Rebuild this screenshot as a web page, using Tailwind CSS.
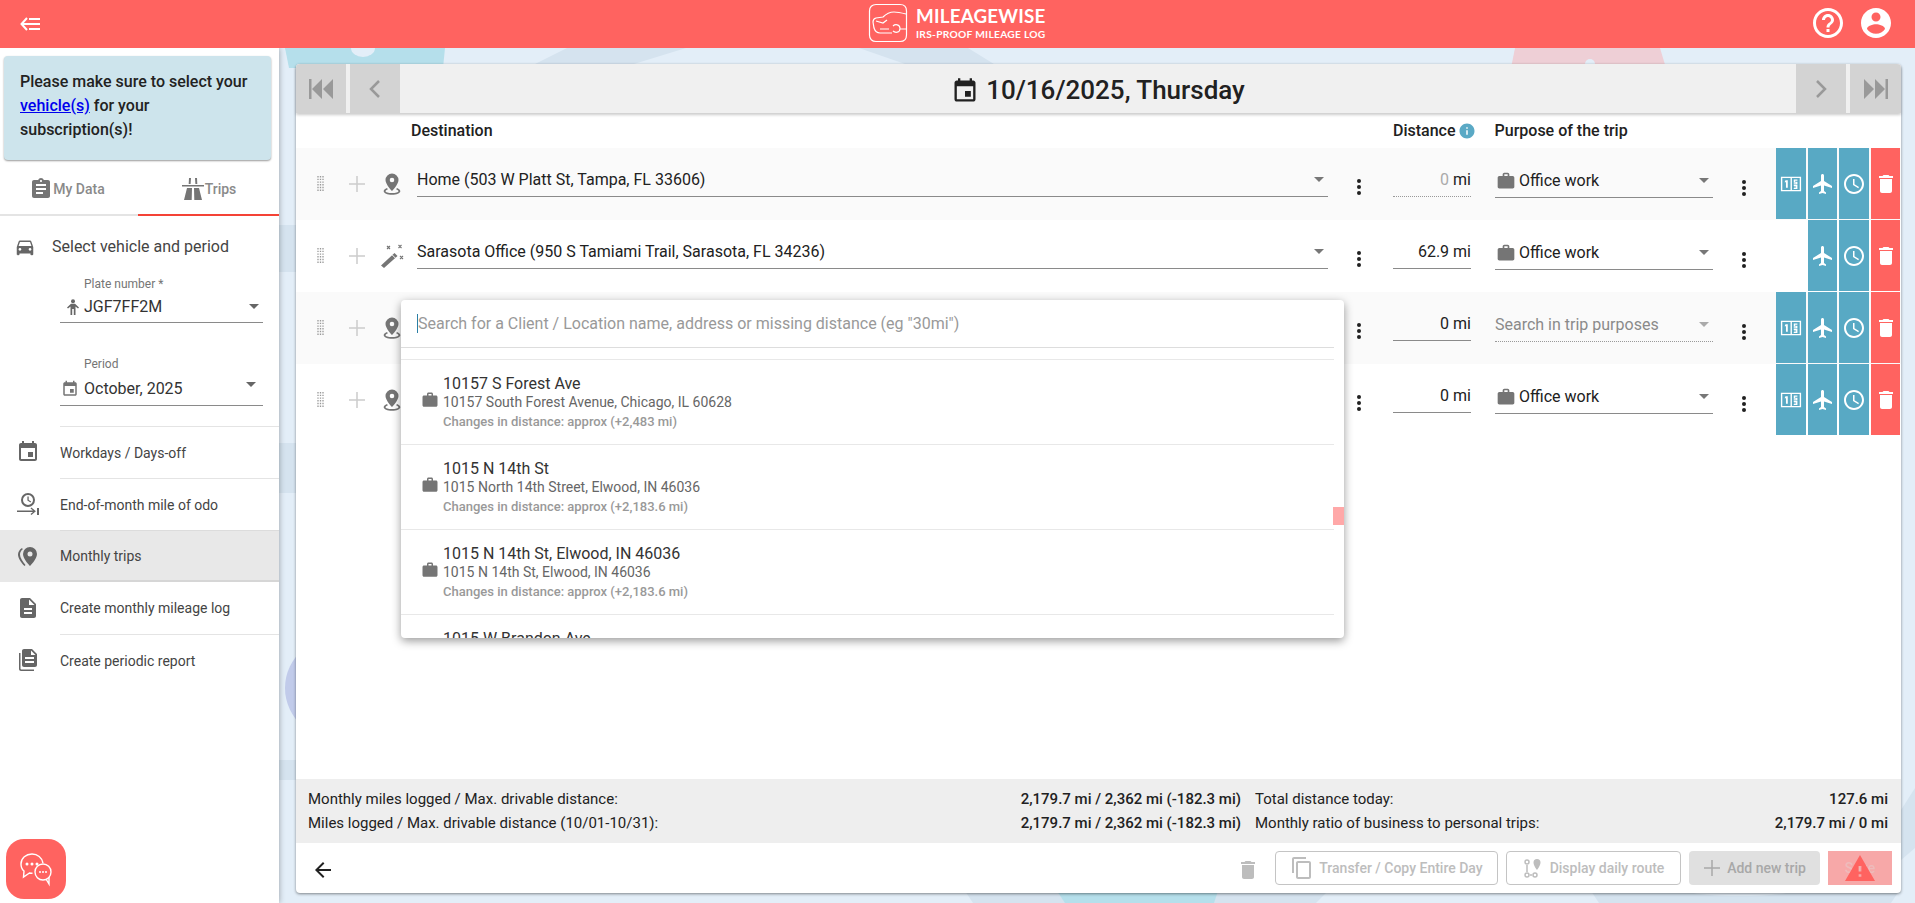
<!DOCTYPE html>
<html lang="en">
<head>
  <meta charset="UTF-8">
  <meta name="viewport" content="width=device-width, initial-scale=1.0">
  <title>MileageWise</title>
  <script src="https://cdn.jsdelivr.net/npm/@tailwindcss/browser@4"></script>
</head>
<body class="h-[903px] overflow-hidden font-['Roboto',sans-serif] text-[#212121]">
  <svg class="hidden">
    <symbol id="i-event" viewBox="0 0 24 24"><path d="M17 12h-5v5h5v-5zM16 1v2H8V1H6v2H5c-1.11 0-1.99.9-1.99 2L3 19c0 1.1.89 2 2 2h14c1.1 0 2-.9 2-2V5c0-1.1-.9-2-2-2h-1V1h-2zm3 18H5V8h14v11z"/></symbol>
    <symbol id="i-work" viewBox="0 0 24 24"><path d="M20 6h-4V4c0-1.11-.89-2-2-2h-4c-1.11 0-2 .89-2 2v2H4c-1.11 0-1.99.89-1.99 2L2 19c0 1.11.89 2 2 2h16c1.11 0 2-.89 2-2V8c0-1.11-.89-2-2-2zm-6 0h-4V4h4v2z"/></symbol>
    <symbol id="i-delete" viewBox="0 0 24 24"><path d="M6 19c0 1.1.9 2 2 2h8c1.1 0 2-.9 2-2V7H6v12zM19 4h-3.5l-1-1h-5l-1 1H5v2h14V4z"/></symbol>
    <symbol id="i-flight" viewBox="0 0 24 24"><path d="M21 16v-2l-8-5V3.5c0-.83-.67-1.5-1.5-1.5S10 2.67 10 3.5V9l-8 5v2l8-2.5V19l-2 1.5V22l3.5-1 3.5 1v-1.5L13 19v-5.5l8 2.5z"/></symbol>
    <symbol id="i-clock" viewBox="0 0 24 24"><path d="M11.99 2C6.47 2 2 6.48 2 12s4.47 10 9.99 10C17.52 22 22 17.52 22 12S17.52 2 11.99 2zM12 20c-4.42 0-8-3.58-8-8s3.58-8 8-8 8 3.58 8 8-3.58 8-8 8zm.5-13H11v6l5.25 3.15.75-1.23-4.5-2.67z"/></symbol>
    <symbol id="i-more" viewBox="0 0 24 24"><circle cx="12" cy="6" r="2"/><circle cx="12" cy="12" r="2"/><circle cx="12" cy="18" r="2"/></symbol>
    <symbol id="i-plus" viewBox="0 0 24 24"><path d="M12 4v16M4 12h16" fill="none" stroke="currentColor" stroke-width="1.5"/></symbol>
    <symbol id="i-pin" viewBox="0 0 24 24"><path fill-rule="evenodd" d="M12 1.500a6.500 6.500 0 0 0-6.500 6.500C5.500 12.500 12 19 12 19s6.500-6.500 6.500-11A6.500 6.500 0 0 0 12 1.500zm0 4.200a2.300 2.300 0 1 1 0 4.600 2.300 2.300 0 0 1 0-4.600z"/><path d="M7 16C4.800 16.800 3.700 18 3.700 19.300 3.700 21.200 7.300 22.800 12 22.800s8.300-1.600 8.300-3.500c0-1.300-1.100-2.500-3.300-3.300l-.9 1.300c1.400.5 2.400 1.200 2.400 2 0 1-2.900 1.800-6.500 1.800s-6.500-.8-6.500-1.800c0-.8 1-1.500 2.400-2z"/></symbol>
    <symbol id="i-wand" viewBox="0 0 24 24"><path d="M1 21.500 14.500 9l3 3L4 24z"/><path d="M12.300 11l3 3" stroke="#fafafa" stroke-width="1"/><path d="M7 2l3 3M10 2 7 5M18.500 1l3 3M21.500 1l-3 3M20 12l3 3M23 12l-3 3" fill="none" stroke="currentColor" stroke-width="1.100"/></symbol>
    <symbol id="i-caret" viewBox="0 0 10 5"><path d="M0 0h10L5 5z"/></symbol>
    <symbol id="i-numbers" viewBox="0 0 24 24"><path fill-rule="evenodd" d="M1 4h22v16H1zm1.500 1.500v13h9v-13zm10.500 0v13h8.500v-13z"/><path d="M6 8h2.500v8H6.500V10H5zM15 7h4v1.500h-2.500v1h2.500v3h-4v-1.200h2.500v-.7H15zM15 13h4v4.500h-4v-1.200h2.500v-.6H15.500v-.9h2v-.6H15z"/></symbol>
    <symbol id="i-handle" viewBox="0 0 7 16"><path d="M1 0v16M3.500 0v16M6 0v16" fill="none" stroke="currentColor" stroke-width="1.300" stroke-dasharray="1.400 1.300"/></symbol>
  </svg>

  <!-- top bar -->
  <header class="relative z-20 h-12 bg-[#ff6360] flex items-center justify-between pl-5 pr-[21px] text-white">
    <svg class="w-[22px] h-[14px]" viewBox="0 0 22 14" fill="none" stroke="currentColor" stroke-width="2"><path d="M7 1 1.500 7 7 13M2 7h18M9 2h11M9 12h11"/></svg>
    <div class="absolute left-[868px] top-[3px] flex items-center gap-2">
      <svg class="w-10 h-10" viewBox="0 0 40 40" fill="none" stroke="currentColor" stroke-width="1.200"><path d="M8 1.500h24c4 0 6.500 2.500 6.500 6.500v24c0 4-2.500 6.500-6.500 6.500H8c-4 0-6.500-2.500-6.500-6.500V8c0-4 2.500-6.500 6.500-6.500z"/><path d="M5 19c0-2 1-3.500 3-4l7-1c3-3 7-5 11-5 4 0 8 1 12 2M5 19l1 6c1 3 3 5 6 5h12M8 18l7 2 4-3M12 26h9M25 23c2-2 7-2 7 2.500S27 30 25 28M32 26h6"/></svg>
      <div class="font-['Lato',sans-serif] font-bold leading-none">
        <div class="text-[18.8px] tracking-[0.2px]">MILEAGEWISE</div>
        <div class="text-[10.2px] tracking-[0.3px] mt-[3px]">IRS-PROOF MILEAGE LOG</div>
      </div>
    </div>
    <div class="flex items-center gap-3 -mt-[2px]">
      <svg class="w-9 h-9 fill-current" viewBox="0 0 24 24"><path d="M11 18h2v-2h-2v2zm1-16C6.48 2 2 6.48 2 12s4.48 10 10 10 10-4.48 10-10S17.52 2 12 2zm0 18c-4.41 0-8-3.59-8-8s3.59-8 8-8 8 3.59 8 8-3.59 8-8 8zm0-14c-2.21 0-4 1.79-4 4h2c0-1.1.9-2 2-2s2 .9 2 2c0 2-3 1.75-3 5h2c0-2.25 3-2.5 3-5 0-2.21-1.79-4-4-4z"/></svg>
      <svg class="w-9 h-9 fill-current" viewBox="0 0 24 24"><path d="M12 2C6.48 2 2 6.48 2 12s4.48 10 10 10 10-4.48 10-10S17.52 2 12 2zm0 3c1.66 0 3 1.34 3 3s-1.34 3-3 3-3-1.34-3-3 1.34-3 3-3zm0 14.2c-2.5 0-4.71-1.28-6-3.22.03-1.99 4-3.08 6-3.08 1.99 0 5.97 1.09 6 3.08-1.29 1.94-3.5 3.22-6 3.22z"/></svg>
    </div>
  </header>

  <div class="flex h-[855px]">
    <!-- sidebar -->
    <aside class="relative z-10 w-[279px] shrink-0 bg-white shadow-[0_0_6px_rgba(0,0,0,0.35)]">
      <div class="mx-1 mt-2 mr-2 h-[104px] bg-[#cde4ec] rounded shadow-[0_1px_2px_rgba(0,0,0,0.4)] pl-4 pt-[14px] text-base font-medium leading-6 text-[#222]">
        Please make sure to select your<br><a class="text-[#0000ee] underline">vehicle(s)</a> for your<br>subscription(s)!
      </div>
      <div class="flex h-14 border-b-2 border-[#e4e4e4] text-sm font-medium text-[#8a8a8a]">
        <div class="w-[138px] flex items-center justify-center pr-1 pt-[3px]">
          <svg class="w-6 h-6 fill-[#757575]" viewBox="0 0 24 24"><path d="M19 3h-4.18C14.4 1.84 13.3 1 12 1c-1.3 0-2.4.84-2.82 2H5c-1.1 0-2 .9-2 2v14c0 1.1.9 2 2 2h14c1.1 0 2-.9 2-2V5c0-1.1-.9-2-2-2zm-7 0c.55 0 1 .45 1 1s-.45 1-1 1-1-.45-1-1 .45-1 1-1zm2 14H7v-2h7v2zm3-4H7v-2h10v2zm0-4H7V7h10v2z"/></svg>
          My Data
        </div>
        <div class="flex-1 flex items-center justify-center pt-[3px] border-b-[2px] border-[#f44336] -mb-[2px]">
          <svg class="w-6 h-6 fill-[#757575]" viewBox="0 0 24 24"><path d="M8 1h2l-.4 6H7.700zM14 1h2l.3 6h-1.900zM1 8h22v1.500H1zM6 11h5l-.3 12H3zM13 11h5l3 12h-7.700z"/></svg>
          Trips
        </div>
      </div>
      <div class="flex items-center pl-[14px] h-[59px] pt-[2px] text-base text-[#444]">
        <svg class="w-[22px] h-[22px] fill-[#666]" viewBox="0 0 24 24"><path d="M18.92 6.01C18.72 5.42 18.16 5 17.5 5h-11c-.66 0-1.21.42-1.42 1.01L3 12v8c0 .55.45 1 1 1h1c.55 0 1-.45 1-1v-1h12v1c0 .55.45 1 1 1h1c.55 0 1-.45 1-1v-8l-2.08-5.99zM6.500 16c-.83 0-1.500-.67-1.500-1.500S5.67 13 6.500 13s1.500.67 1.500 1.500S7.330 16 6.500 16zm11 0c-.83 0-1.500-.67-1.500-1.500s.67-1.500 1.500-1.500 1.500.67 1.500 1.500-.67 1.500-1.500 1.500zM5 11l1.500-4.500h11L19 11H5z"/></svg>
        <span class="ml-4">Select vehicle and period</span>
      </div>
      <div class="ml-[60px] w-[203px]">
        <label class="block pl-6 text-xs text-[#757575] leading-4 mt-[1px]">Plate number *</label>
        <div class="flex items-center h-[30px] border-b border-[#8a8a8a] mt-[1px] pb-[2px] text-base text-[#333]">
          <svg class="w-4 h-4 ml-[5px] mr-[3px] fill-[#666]" viewBox="0 0 16 16"><circle cx="8" cy="2.200" r="2"/><path d="M2 8.500 6 4.800h4l4 3.700-1 1.100-2.500-2V16h-1.700v-6H7.200v6H5.500V7.600L3 9.600z"/></svg>
          JGF7FF2M
          <svg class="w-[10px] h-[5px] ml-auto mr-1 fill-[#666]"><use href="#i-caret"/></svg>
        </div>
        <label class="block pl-6 text-xs text-[#757575] leading-4 mt-[33px]">Period</label>
        <div class="flex items-center h-[34px] border-b border-[#8a8a8a] text-base text-[#333]">
          <svg class="w-[18px] h-[18px] ml-[1px] mr-[5px] fill-[#757575]"><use href="#i-event"/></svg>
          October, 2025
          <svg class="w-[10px] h-[5px] ml-auto mr-[7px] mb-2 fill-[#666]"><use href="#i-caret"/></svg>
        </div>
      </div>
      <nav class="mt-[20px] text-sm text-[#444]">
        <div class="flex items-center h-[52px]">
          <svg class="w-6 h-6 mx-[16px] fill-[#666] shrink-0"><use href="#i-event"/></svg>
          <span class="flex-1 ml-[4px] h-full flex items-center border-t border-[#e4e4e4]">Workdays / Days-off</span>
        </div>
        <div class="flex items-center h-[52px]">
          <svg class="w-6 h-6 mx-[16px] fill-[#666] shrink-0" viewBox="0 0 24 24"><path fill-rule="evenodd" d="M12 1a7 7 0 1 1 0 14 7 7 0 0 1 0-14zm0 2a5 5 0 1 0 0 10 5 5 0 0 0 0-10zm-.6 1.500h1.300v3.500l2.500 1.500-.7 1-3.100-1.900z"/><path d="M1 18.500h16l-2.500-2 .9-1 4.500 3.800-4.500 3.700-.9-1 2.500-2H1zM21 16h2v7h-2z"/></svg>
          <span class="flex-1 ml-[4px] h-full flex items-center border-t border-[#e4e4e4]">End-of-month mile of odo</span>
        </div>
        <div class="flex items-center h-[52px] bg-[#e8e8e8]">
          <svg class="w-6 h-6 mx-[16px] fill-[#666] shrink-0" viewBox="0 0 24 24"><path fill-rule="evenodd" d="M14 3a7 7 0 0 0-7 7c0 5 7 12 7 12s7-7 7-12a7 7 0 0 0-7-7zm0 4.500a2.500 2.500 0 1 1 0 5 2.500 2.500 0 0 1 0-5z"/><path d="M6 4C3.500 5.500 2 8 2 10.500c0 3.500 3 8 6.500 11.500l1-1C6.500 17.500 4 13.500 4 10.500 4 8.500 5 6.700 6.800 5.300z"/></svg>
          <span class="flex-1 ml-[4px] h-full flex items-center border-t border-b-2 border-t-[#dcdcdc] border-b-[#d6d6d6]">Monthly trips</span>
        </div>
        <div class="flex items-center h-[52px]">
          <svg class="w-6 h-6 mx-[16px] fill-[#666] shrink-0" viewBox="0 0 24 24"><path d="M14 2H6c-1.1 0-1.99.9-1.99 2L4 20c0 1.1.89 2 1.99 2H18c1.1 0 2-.9 2-2V8l-6-6zm2 16H8v-2h8v2zm0-4H8v-2h8v2zm-3-5V3.500L18.500 9H13z"/></svg>
          <span class="flex-1 ml-[4px] h-full flex items-center">Create monthly mileage log</span>
        </div>
        <div class="flex items-center h-[52px]">
          <svg class="w-6 h-6 mx-[16px] fill-[#666] shrink-0" viewBox="0 0 24 24"><path d="M16 1H8c-1.1 0-2 .9-2 2v14c0 1.1.9 2 2 2h11c1.1 0 2-.9 2-2V6l-5-5zm2 14H9v-2h9v2zm0-4H9V9h9v2zm-3-4V2.500L19.500 7H15zM3 5v16c0 1.1.9 2 2 2h13v-1.500H5.500c-.5 0-1-.4-1-1V5z"/></svg>
          <span class="flex-1 ml-[4px] h-full flex items-center border-t border-[#e4e4e4]">Create periodic report</span>
        </div>
      </nav>
      <div class="absolute left-[6px] bottom-1 w-[60px] h-[60px] rounded-[18px] bg-[#ff6360] flex items-center justify-center">
        <svg class="w-9 h-9 text-white" viewBox="0 0 36 36" fill="none" stroke="currentColor" stroke-width="1.400"><path d="M14 3C8 3 3 7 3 13c0 3 1 5.500 3 7l-.5 6 6-4c1 .2 2 .3 3 .3"/><path d="M14 3c5.500 0 10 3.500 11 9"/><circle cx="25" cy="21" r="8"/><path d="M28 28l3 5v-7"/><g fill="currentColor" stroke="none"><circle cx="9" cy="13" r="1.500"/><circle cx="14" cy="13" r="1.500"/><circle cx="19" cy="13" r="1.500"/><circle cx="22" cy="21" r="1"/><circle cx="25" cy="21" r="1"/><circle cx="28" cy="21" r="1"/></g></svg>
      </div>
    </aside>

    <!-- main -->
    <main class="relative flex-1 bg-[#e3eef8] overflow-hidden pt-4 pl-[17px] pr-[14px] pb-[10px]">
      <svg class="absolute inset-0 w-[1636px] h-[855px]" viewBox="0 0 1636 855">
        <path d="M288 0h119l-52 16h-99zM580 0h109l26 16h-89z" fill="#d5e3ef"/>
        <path d="M6 0h160l-2 20H10z" fill="#b5dfeb"/>
        <ellipse cx="84" cy="0" rx="12" ry="9" fill="#e3eef8"/>
        <path d="M1236 0h145l6 20h-155z" fill="#eecfd6"/>
        <circle cx="1311" cy="16" r="5" fill="#e3eef8"/>
        <path d="M0 177h17v47H0zM0 395h17v50H0zM0 712h17v20H0z" fill="#d5e3ef"/>
        <ellipse cx="70" cy="640" rx="64" ry="56" fill="#c1cbea"/>
        <path d="M694 855l-8-12h363l-12 12z" fill="#d5e3ef"/>
        <path d="M778 843h161l-4 12H786z" fill="#b5dfeb"/>
        <path d="M1320 855l-8-12h308l-8 12z" fill="#d5e3ef"/>
        <ellipse cx="1461" cy="840" rx="60" ry="8" fill="#e3eef8"/>
        <path d="M1636 740v60l-14 12v-50z" fill="#d5e3ef"/>
      </svg>

      <section class="relative h-[829px] bg-white rounded-[4px] shadow-[0_1px_3px_rgba(0,0,0,0.45)] flex flex-col">
        <!-- date bar -->
        <div class="flex h-[49px] shrink-0 bg-[#f0f0f0] rounded-t-[4px] shadow-[0_2px_3px_rgba(0,0,0,0.2)] relative z-[1]">
          <div class="w-[50px] bg-[#d3d3d3] rounded-tl-[4px] flex items-center justify-center">
            <svg class="w-[26px] h-5 fill-[#999]" viewBox="0 0 26 20"><path d="M1 0h2.500v20H1zM14 0v20L4 10zM25 0v20L15 10z"/></svg>
          </div>
          <div class="w-[50px] ml-1 bg-[#d3d3d3] flex items-center justify-center">
            <svg class="w-3 h-5" viewBox="0 0 12 20" fill="none" stroke="#999" stroke-width="2.500"><path d="M10 2 2 10l8 8"/></svg>
          </div>
          <div class="flex-1 flex items-center justify-center gap-[7px] pt-1 text-[26px] font-medium text-[#212121]">
            <svg class="w-7 h-7 fill-[#212121]"><use href="#i-event"/></svg>
            10/16/2025, Thursday
          </div>
          <div class="w-[50px] mr-1 bg-[#d3d3d3] flex items-center justify-center">
            <svg class="w-3 h-5" viewBox="0 0 12 20" fill="none" stroke="#999" stroke-width="2.500"><path d="M2 2l8 8-8 8"/></svg>
          </div>
          <div class="w-[51px] bg-[#d3d3d3] rounded-tr-[4px] flex items-center justify-center">
            <svg class="w-[26px] h-5 fill-[#999]" viewBox="0 0 26 20"><path d="M1 0v20l10-10zM12 0v20l10-10zM22.500 0H25v20h-2.500z"/></svg>
          </div>
        </div>

        <!-- column headers -->
        <div class="flex items-center h-[35px] shrink-0 text-base font-medium">
          <span class="ml-[115px] w-[982px]">Destination</span>
          <span>Distance</span>
          <svg class="w-[18px] h-[18px] ml-[2px] fill-[#5aa9c5]" viewBox="0 0 24 24"><path d="M12 2C6.48 2 2 6.48 2 12s4.48 10 10 10 10-4.48 10-10S17.52 2 12 2zm1 15h-2v-6h2v6zm0-8h-2V7h2v2z"/></svg>
          <span class="ml-[19px]">Purpose of the trip</span>
        </div>

        <!-- trip rows -->
        <div class="relative flex-1">
          <div class="flex h-[72px] bg-[#fafafa]">
            <div class="w-[1097px] flex shrink-0">
              <svg class="w-[7px] h-4 ml-[21px] mt-[28px] text-[#999]"><use href="#i-handle"/></svg>
              <svg class="w-6 h-6 ml-[21px] mt-6 text-[#ccc]"><use href="#i-plus"/></svg>
              <svg class="w-6 h-6 ml-[11px] mt-6 fill-[#757575]"><use href="#i-pin"/></svg>
              <div class="ml-[13px] mt-[14px] w-[911px] h-[35px] border-b border-[#8a8a8a] flex items-center text-base pt-[1px]">
                Home (503 W Platt St, Tampa, FL 33606)
                <svg class="w-[10px] h-[5px] ml-auto mr-1 fill-[#777]"><use href="#i-caret"/></svg>
              </div>
              <svg class="w-6 h-6 ml-[19px] mt-[27px] fill-[#212121]"><use href="#i-more"/></svg>
            </div>
            <div class="mt-[14px] w-[78px] h-[35px] border-b border-dotted border-[#999] text-base text-right pt-[6px]"><span class="text-[#aaa]">0</span> mi</div>
            <div class="ml-6 mt-[14px] w-[218px] h-[36px] border-b border-[#8a8a8a] flex items-center text-base pt-[2px]">
              <svg class="w-5 h-5 ml-[1px] mr-[3px] fill-[#757575]"><use href="#i-work"/></svg>Office work
              <svg class="w-[10px] h-[5px] ml-auto mr-1 fill-[#777]"><use href="#i-caret"/></svg>
            </div>
            <svg class="w-6 h-6 ml-[19px] mt-[28px] fill-[#212121]"><use href="#i-more"/></svg>
            <div class="ml-auto mr-[1px] flex gap-[2px] h-[71px]">
              <div class="w-[30px] bg-[#58a9c4] flex items-center justify-center"><svg class="w-[22px] h-[22px] fill-white"><use href="#i-numbers"/></svg></div>
              <div class="w-[29px] bg-[#58a9c4] flex items-center justify-center"><svg class="w-6 h-6 fill-white"><use href="#i-flight"/></svg></div>
              <div class="w-[30px] bg-[#58a9c4] flex items-center justify-center"><svg class="w-6 h-6 fill-white"><use href="#i-clock"/></svg></div>
              <div class="w-[29px] bg-[#ff6360] flex items-center justify-center"><svg class="w-6 h-6 fill-white"><use href="#i-delete"/></svg></div>
            </div>
          </div>

          <div class="flex h-[72px] bg-white">
            <div class="w-[1097px] flex shrink-0">
              <svg class="w-[7px] h-4 ml-[21px] mt-[28px] text-[#999]"><use href="#i-handle"/></svg>
              <svg class="w-6 h-6 ml-[21px] mt-6 text-[#ccc]"><use href="#i-plus"/></svg>
              <svg class="w-6 h-6 ml-[11px] mt-6 fill-[#757575] text-[#757575]"><use href="#i-wand"/></svg>
              <div class="ml-[13px] mt-[14px] w-[911px] h-[35px] border-b border-[#8a8a8a] flex items-center text-base pt-[1px]">
                Sarasota Office (950 S Tamiami Trail, Sarasota, FL 34236)
                <svg class="w-[10px] h-[5px] ml-auto mr-1 fill-[#777]"><use href="#i-caret"/></svg>
              </div>
              <svg class="w-6 h-6 ml-[19px] mt-[27px] fill-[#212121]"><use href="#i-more"/></svg>
            </div>
            <div class="mt-[14px] w-[78px] h-[35px] border-b border-[#8a8a8a] text-base text-right pt-[6px]">62.9 mi</div>
            <div class="ml-6 mt-[14px] w-[218px] h-[36px] border-b border-[#8a8a8a] flex items-center text-base pt-[2px]">
              <svg class="w-5 h-5 ml-[1px] mr-[3px] fill-[#757575]"><use href="#i-work"/></svg>Office work
              <svg class="w-[10px] h-[5px] ml-auto mr-1 fill-[#777]"><use href="#i-caret"/></svg>
            </div>
            <svg class="w-6 h-6 ml-[19px] mt-[28px] fill-[#212121]"><use href="#i-more"/></svg>
            <div class="ml-auto mr-[1px] flex gap-[2px] h-[71px]">
              <div class="w-[30px]"></div>
              <div class="w-[29px] bg-[#58a9c4] flex items-center justify-center"><svg class="w-6 h-6 fill-white"><use href="#i-flight"/></svg></div>
              <div class="w-[30px] bg-[#58a9c4] flex items-center justify-center"><svg class="w-6 h-6 fill-white"><use href="#i-clock"/></svg></div>
              <div class="w-[29px] bg-[#ff6360] flex items-center justify-center"><svg class="w-6 h-6 fill-white"><use href="#i-delete"/></svg></div>
            </div>
          </div>

          <div class="flex h-[72px] bg-[#fafafa]">
            <div class="w-[1097px] flex shrink-0">
              <svg class="w-[7px] h-4 ml-[21px] mt-[28px] text-[#999]"><use href="#i-handle"/></svg>
              <svg class="w-6 h-6 ml-[21px] mt-6 text-[#ccc]"><use href="#i-plus"/></svg>
              <svg class="w-6 h-6 ml-[11px] mt-6 fill-[#757575]"><use href="#i-pin"/></svg>
              <div class="ml-[13px] mt-[14px] w-[911px]"></div>
              <svg class="w-6 h-6 ml-[19px] mt-[27px] fill-[#212121]"><use href="#i-more"/></svg>
            </div>
            <div class="mt-[14px] w-[78px] h-[35px] border-b border-[#8a8a8a] text-base text-right pt-[6px]">0 mi</div>
            <div class="ml-6 mt-[14px] w-[218px] h-[36px] border-b border-dotted border-[#999] flex items-center text-base pt-[2px] text-[#8a8a8a]">
              Search in trip purposes
              <svg class="w-[10px] h-[5px] ml-auto mr-1 fill-[#aaa]"><use href="#i-caret"/></svg>
            </div>
            <svg class="w-6 h-6 ml-[19px] mt-[28px] fill-[#212121]"><use href="#i-more"/></svg>
            <div class="ml-auto mr-[1px] flex gap-[2px] h-[71px]">
              <div class="w-[30px] bg-[#58a9c4] flex items-center justify-center"><svg class="w-[22px] h-[22px] fill-white"><use href="#i-numbers"/></svg></div>
              <div class="w-[29px] bg-[#58a9c4] flex items-center justify-center"><svg class="w-6 h-6 fill-white"><use href="#i-flight"/></svg></div>
              <div class="w-[30px] bg-[#58a9c4] flex items-center justify-center"><svg class="w-6 h-6 fill-white"><use href="#i-clock"/></svg></div>
              <div class="w-[29px] bg-[#ff6360] flex items-center justify-center"><svg class="w-6 h-6 fill-white"><use href="#i-delete"/></svg></div>
            </div>
          </div>

          <div class="flex h-[72px] bg-white">
            <div class="w-[1097px] flex shrink-0">
              <svg class="w-[7px] h-4 ml-[21px] mt-[28px] text-[#999]"><use href="#i-handle"/></svg>
              <svg class="w-6 h-6 ml-[21px] mt-6 text-[#ccc]"><use href="#i-plus"/></svg>
              <svg class="w-6 h-6 ml-[11px] mt-6 fill-[#757575]"><use href="#i-pin"/></svg>
              <div class="ml-[13px] mt-[14px] w-[911px]"></div>
              <svg class="w-6 h-6 ml-[19px] mt-[27px] fill-[#212121]"><use href="#i-more"/></svg>
            </div>
            <div class="mt-[14px] w-[78px] h-[35px] border-b border-[#8a8a8a] text-base text-right pt-[6px]">0 mi</div>
            <div class="ml-6 mt-[14px] w-[218px] h-[36px] border-b border-[#8a8a8a] flex items-center text-base pt-[2px]">
              <svg class="w-5 h-5 ml-[1px] mr-[3px] fill-[#757575]"><use href="#i-work"/></svg>Office work
              <svg class="w-[10px] h-[5px] ml-auto mr-1 fill-[#777]"><use href="#i-caret"/></svg>
            </div>
            <svg class="w-6 h-6 ml-[19px] mt-[28px] fill-[#212121]"><use href="#i-more"/></svg>
            <div class="ml-auto mr-[1px] flex gap-[2px] h-[71px]">
              <div class="w-[30px] bg-[#58a9c4] flex items-center justify-center"><svg class="w-[22px] h-[22px] fill-white"><use href="#i-numbers"/></svg></div>
              <div class="w-[29px] bg-[#58a9c4] flex items-center justify-center"><svg class="w-6 h-6 fill-white"><use href="#i-flight"/></svg></div>
              <div class="w-[30px] bg-[#58a9c4] flex items-center justify-center"><svg class="w-6 h-6 fill-white"><use href="#i-clock"/></svg></div>
              <div class="w-[29px] bg-[#ff6360] flex items-center justify-center"><svg class="w-6 h-6 fill-white"><use href="#i-delete"/></svg></div>
            </div>
          </div>

          <!-- destination search popup -->
          <div class="absolute left-[105px] top-[152px] w-[943px] h-[338px] bg-white rounded-[4px] shadow-[0_3px_10px_rgba(0,0,0,0.4)] overflow-hidden">
            <div class="w-[933px]">
              <div class="h-[48px] border-b border-[#ddd] pl-4 pt-[12px] text-base text-[#999] leading-6"><span class="border-l border-[#2b7fa5]">Search for a Client / Location name, address or missing distance (eg "30mi")</span></div>
              <div class="h-[11px] border-b border-[#e8e8e8] box-content"></div>
              <div class="h-[85px] border-b border-[#e8e8e8] flex items-center pl-5">
                <svg class="w-[18px] h-[18px] fill-[#757575] mr-1 mb-1"><use href="#i-work"/></svg>
                <div>
                  <div class="text-base leading-[19px] text-[#333]">10157 S Forest Ave</div>
                  <div class="text-sm leading-[19px] text-[#666]">10157 South Forest Avenue, Chicago, IL 60628</div>
                  <div class="text-[13px] leading-[19px] font-medium text-[#999]">Changes in distance: approx (+2,483 mi)</div>
                </div>
              </div>
              <div class="h-[85px] border-b border-[#e8e8e8] flex items-center pl-5">
                <svg class="w-[18px] h-[18px] fill-[#757575] mr-1 mb-1"><use href="#i-work"/></svg>
                <div>
                  <div class="text-base leading-[19px] text-[#333]">1015 N 14th St</div>
                  <div class="text-sm leading-[19px] text-[#666]">1015 North 14th Street, Elwood, IN 46036</div>
                  <div class="text-[13px] leading-[19px] font-medium text-[#999]">Changes in distance: approx (+2,183.6 mi)</div>
                </div>
              </div>
              <div class="h-[85px] border-b border-[#e8e8e8] flex items-center pl-5">
                <svg class="w-[18px] h-[18px] fill-[#757575] mr-1 mb-1"><use href="#i-work"/></svg>
                <div>
                  <div class="text-base leading-[19px] text-[#333]">1015 N 14th St, Elwood, IN 46036</div>
                  <div class="text-sm leading-[19px] text-[#666]">1015 N 14th St, Elwood, IN 46036</div>
                  <div class="text-[13px] leading-[19px] font-medium text-[#999]">Changes in distance: approx (+2,183.6 mi)</div>
                </div>
              </div>
              <div class="pl-[42px] pt-[14px] text-base leading-[19px] text-[#333]">1015 W Brandon Ave</div>
            </div>
            <div class="absolute right-0 top-[207px] w-[11px] h-[18px] bg-[#ffa8a8]"></div>
          </div>
        </div>

        <!-- monthly totals -->
        <div class="h-[64px] shrink-0 bg-[#eeeeee] grid grid-cols-[947px_1fr] content-start pl-3 pr-[13px] pt-2 text-[15px] leading-6">
          <div class="flex justify-between pr-[14px]"><span>Monthly miles logged / Max. drivable distance:</span><span class="font-medium">2,179.7 mi / 2,362 mi (-182.3 mi)</span></div>
          <div class="flex justify-between"><span>Total distance today:</span><span class="font-medium">127.6 mi</span></div>
          <div class="flex justify-between pr-[14px]"><span>Miles logged / Max. drivable distance (10/01-10/31):</span><span class="font-medium">2,179.7 mi / 2,362 mi (-182.3 mi)</span></div>
          <div class="flex justify-between"><span>Monthly ratio of business to personal trips:</span><span class="font-medium">2,179.7 mi / 0 mi</span></div>
        </div>

        <!-- actions -->
        <div class="h-[50px] shrink-0 flex items-center pl-[15px] pr-[9px] text-sm font-medium text-[#bdbdbd]">
          <svg class="w-6 h-6 mt-1 fill-[#212121]" viewBox="0 0 24 24"><path d="M20 11H7.83l5.59-5.59L12 4l-8 8 8 8 1.41-1.41L7.83 13H20v-2z"/></svg>
          <svg class="w-6 h-6 mt-1 ml-auto mr-[15px] fill-[#bdbdbd]"><use href="#i-delete"/></svg>
          <div class="w-[223px] h-[34px] rounded-[4px] border border-[#c4c4c4] flex items-center justify-center gap-[5px]">
            <svg class="w-6 h-6 fill-[#bdbdbd]" viewBox="0 0 24 24"><path d="M16 1H4c-1.1 0-2 .9-2 2v14h2V3h12V1zm3 4H8c-1.1 0-2 .9-2 2v14c0 1.1.9 2 2 2h11c1.1 0 2-.9 2-2V7c0-1.1-.9-2-2-2zm0 16H8V7h11v14z"/></svg>
            Transfer / Copy Entire Day
          </div>
          <div class="w-[175px] h-[34px] ml-2 rounded-[4px] border border-[#c4c4c4] flex items-center justify-center gap-[7px]">
            <svg class="w-5 h-5 text-[#bdbdbd]" viewBox="0 0 20 20" fill="none" stroke="currentColor" stroke-width="1.500"><circle cx="4" cy="4" r="2"/><circle cx="4" cy="17" r="2"/><circle cx="12" cy="17" r="2"/><path d="M4 7v7M7 17h2"/><path fill="currentColor" stroke="none" d="M14 1a3.500 3.500 0 0 0-3.500 3.500C10.500 7.500 14 12 14 12s3.500-4.500 3.500-7.500A3.500 3.500 0 0 0 14 1z"/></svg>
            Display daily route
          </div>
          <div class="w-[131px] h-[34px] ml-2 rounded-[4px] bg-[#e0e0e0] text-[#a8a8a8] flex items-center justify-center gap-[3px] pr-[3px]">
            <svg class="w-6 h-6 text-[#a8a8a8]"><use href="#i-plus"/></svg>
            Add new trip
          </div>
          <div class="relative w-[64px] h-[34px] ml-2 bg-[#f7a8a8] text-[#eebbbb] flex items-center justify-center">
            Save
            <svg class="absolute left-[17px] top-[3px] w-[30px] h-[28px] fill-[#ff6360]" viewBox="1 2 22 19"><path d="M1 21h22L12 2 1 21zm12-3h-2v-2h2v2zm0-4h-2v-4h2v4z"/></svg>
          </div>
        </div>
      </section>
    </main>
  </div>
</body>
</html>
